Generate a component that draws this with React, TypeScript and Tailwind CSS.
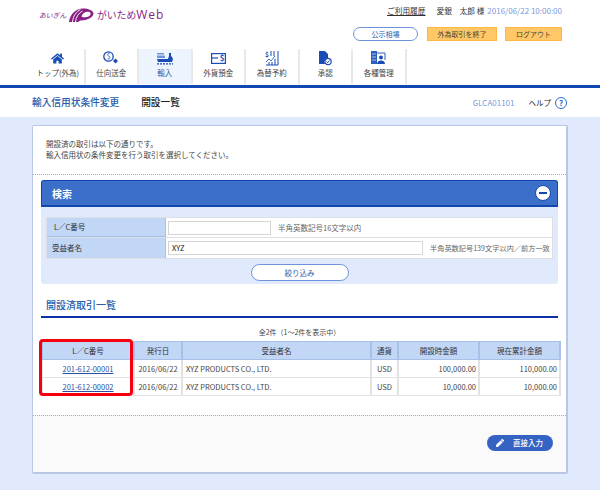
import React from 'react';
import { FaHome, FaPen } from 'react-icons/fa';

const font = { fontFamily: '"Noto Sans CJK JP", "Open Sans", sans-serif' };

const SendIcon = () => (
    <svg width="16" height="14" viewBox="0 0 16 14" fill="none">
        <circle cx="5.500" cy="5.500" r="4.700" stroke="#1a4db5" strokeWidth="1.300" />
        <text x="5.500" y="8.200" fontSize="7.500" textAnchor="middle" fill="#1a4db5">$</text>
        <path d="M12.500 7.500l2.500 2.500-2.500 2.500-2.500-2.500z" fill="#1a4db5" />
    </svg>
);

const ShipIcon = () => (
    <svg width="16" height="13" viewBox="0 0 16 13" fill="none">
        <path d="M0 1h7v1.500H0zM0 3.500h8V6H0z" fill="#6f94d6" />
        <path d="M0 7h11l1-3V1h2v3l1 1 1 2-1 3H1z" fill="#1a4db5" />
        <path d="M0 11.800h16" stroke="#1a4db5" strokeWidth="1.200" strokeDasharray="2 1" />
    </svg>
);

const DepositIcon = () => (
    <svg width="15" height="11" viewBox="0 0 15 11" fill="none">
        <rect x="0.600" y="0.600" width="13.800" height="9.800" stroke="#1a4db5" strokeWidth="1.200" />
        <path d="M1 5h6" stroke="#1a4db5" strokeWidth="1.200" />
        <text x="11" y="8.200" fontSize="8" textAnchor="middle" fontWeight="700" fill="#1a4db5">$</text>
    </svg>
);

const ForwardIcon = () => (
    <svg width="15" height="16" viewBox="0 0 15 16" fill="none">
        <text x="3" y="6.500" fontSize="6.500" textAnchor="middle" fontWeight="700" fill="#1a4db5">$</text>
        <path d="M7 1v5M10 1v5" stroke="#1a4db5" />
        <path d="M14 1v14H2" stroke="#1a4db5" />
        <path d="M2 12l3-3 2 2 4-5" stroke="#3f6cc4" />
        <path d="M5 15v-3M8 15v-3M11 15V9" stroke="#1a4db5" />
    </svg>
);

const ApproveIcon = () => (
    <svg width="13" height="15" viewBox="0 0 13 15" fill="none">
        <path d="M0 0h6l3 3v4a4 4 0 0 0-3 6H0z" fill="#1a4db5" />
        <circle cx="9" cy="10.500" r="3.200" stroke="#1a4db5" strokeWidth="1.200" fill="#fff" />
        <path d="M7.500 10.500l1.200 1.200 1.800-2.200" stroke="#1a4db5" />
    </svg>
);

const ManageIcon = () => (
    <svg width="15" height="14" viewBox="0 0 15 14" fill="none">
        <path d="M0 0h6v13H0z" fill="#2f5fbd" />
        <path d="M1 3h4M1 6h4M1 9h4" stroke="#a9c2ec" />
        <path d="M6 2h8v7" stroke="#2f5fbd" />
        <circle cx="10" cy="6.500" r="2" fill="#1a4db5" />
        <path d="M6 13c0-2.500 2-3.500 4-3.500s4 1 4 3.500z" fill="#1a4db5" />
    </svg>
);

const navItems = [
    { label: 'トップ(外為)', icon: <FaHome size={13} color="#1a4db5" /> },
    { label: '仕向送金', icon: <SendIcon /> },
    { label: '輸入', icon: <ShipIcon />, active: true },
    { label: '外貨預金', icon: <DepositIcon /> },
    { label: '為替予約', icon: <ForwardIcon /> },
    { label: '承認', icon: <ApproveIcon /> },
    { label: '各種管理', icon: <ManageIcon /> },
];

const rows = [
    { no: '201-612-00001', open: '100,000.00', total: '110,000.00' },
    { no: '201-612-00002', open: '10,000.00', total: '10,000.00' },
];

const Th = ({ className, children }: any) => (
    <th className={`h-[18px] border-x-2 border-y border-[#a8c0e8] bg-[#c2d6f6] text-[7.500px] font-normal text-[#333] ${className}`}>
        {children}
    </th>
);

const Td = ({ className, children }: any) => (
    <td className={`h-[18px] border-x-2 border-y border-[#e2e2e2] text-[7.500px] text-[#444] ${className}`}>
        {children}
    </td>
);

const App = () => {
    return (
        <div className="flex h-[490px] w-[600px] flex-col overflow-hidden bg-[#e0eafc]" style={font}>
            {/* Header */}
            <div className="bg-white">
                <div className="flex h-[48px] justify-between pl-[39px] pr-[38px] pt-[4px]">
                    <div className="flex h-[22px] items-center text-[#8a1f85]">
                        <span className="w-[28px] whitespace-nowrap text-[6.800px] italic">あいぎん</span>
                        <svg className="ml-[2px]" width="25" height="14" viewBox="0 0 25 14" fill="none">
                            <path d="M0 14C1 6 7 0.500 14 0.500c5 0 10.500 2 10.500 5 0 4-7 7-12 7-1 0-1.500 0-2 .5L9 14z" fill="#8a1f85" />
                            <path d="M3.500 14C4 8 7.500 3.500 11.500 1.500M6.500 14C7 9 9.500 5 13.500 3" stroke="#fff" strokeWidth="0.900" />
                            <path d="M12.500 8.500C13.500 5 16.500 3.800 19 3.800c2 0 3 1 2.500 2.700C21 8.500 16 10.500 12.500 8.500z" fill="#fff" />
                        </svg>
                        <span className="ml-[3px] whitespace-nowrap text-[9.800px]">がいため</span>
                        <span className="text-[12px] tracking-[1px]" style={{ fontFamily: '"Open Sans", sans-serif' }}>Web</span>
                    </div>
                    <div className="flex flex-col items-end">
                        <div className="flex h-[13px] items-center whitespace-nowrap text-[7.700px] text-[#333]">
                            <span className="underline">ご利用履歴</span>
                            <span className="ml-[11px]">愛銀　太郎 様</span>
                            <span className="ml-[3px] text-[8px] text-[#7a9ade]">2016/06/22 10:00:00</span>
                        </div>
                        <div className="mt-[10px] flex gap-[8px] text-[7px]">
                            <div className="mr-[1px] flex h-[14px] w-[65px] items-center justify-center rounded-full border border-[#6d93da] text-[#2a5caa]">公示相場</div>
                            <div className="flex h-[14px] w-[70px] items-center justify-center border border-[#fdb845] bg-[#ffc766] text-[#443]">外為取引を終了</div>
                            <div className="flex h-[14px] w-[57px] items-center justify-center border border-[#fdb845] bg-[#ffc766] text-[#443]">ログアウト</div>
                        </div>
                    </div>
                </div>
                {/* Nav */}
                <div className="flex h-[37px] py-[1px] pl-[32px]">
                    {navItems.map((item, index) => (
                        <div
                            key={index}
                            className={`flex w-[53.500px] flex-col items-center justify-between border-r-2 border-[#e8e8e8] pb-[6px] ${item.active ? 'bg-[#eef4fd]' : ''} ${index === 6 ? 'border-r-0' : ''}`}
                        >
                            <div className="flex h-[18px] items-center justify-center">{item.icon}</div>
                            <span className={`whitespace-nowrap text-[7.500px] leading-[10px] ${item.active ? 'text-[#2a5caa]' : 'text-[#444]'}`}>{item.label}</span>
                        </div>
                    ))}
                </div>
                <div className="h-[3px] bg-[#0f47b4]" />
                {/* Breadcrumb */}
                <div className="flex h-[29px] items-center pl-[32px] pr-[33px]">
                    <span className="text-[9.700px] font-medium text-[#2a5caa]">輸入信用状条件変更</span>
                    <span className="ml-[22px] text-[9.700px] font-medium text-[#222]">開設一覧</span>
                    <span className="ml-auto text-[8px] text-[#7a9ade]">GLCA01101</span>
                    <span className="ml-[14px] text-[7.500px] text-[#222]">ヘルプ</span>
                    <span className="ml-[4px] flex h-[12px] w-[12px] items-center justify-center rounded-full border border-[#2a6bd0] text-[8px] font-bold text-[#2a6bd0]">?</span>
                </div>
            </div>

            {/* Card */}
            <div className="mx-[32px] mt-[8px] flex h-[349px] flex-col rounded-[2px] border border-[#b8c8e4] border-b-2 border-r-2 bg-white">
                <div className="h-[48px] pl-[13px] pt-[12px] text-[7.500px] leading-[11px] text-[#444]">
                    <p>開設済の取引は以下の通りです。</p>
                    <p>輸入信用状の条件変更を行う取引を選択してください。</p>
                </div>
                <div className="border-t border-dotted border-[#aaa]" />

                {/* Search panel */}
                <div className="mx-[8px] mt-[5px] h-[104px] rounded-[3px] bg-[#e0eafc]">
                    <div className="flex h-[27px] items-center justify-between rounded-t-[3px] border border-b-2 border-[#1248ae] bg-[#3b6fc9] pl-[10px] pr-[6px]">
                        <span className="text-[10px] font-bold text-white">検索</span>
                        <span className="flex h-[16px] w-[16px] items-center justify-center rounded-full border border-[#1248ae] bg-white">
                            <span className="h-[2px] w-[8px] bg-[#1248ae]" />
                        </span>
                    </div>
                    <div className="mx-[5px] mt-[10px] border border-[#dcdfe6] text-[7.500px]">
                        <div className="flex h-[20px] border-b border-[#dcdfe6] bg-white">
                            <div className="flex w-[119px] shrink-0 items-center border-b border-r border-[#a8c0e8] bg-[#c2d6f6] pl-[7px] text-[#333]">L／C番号</div>
                            <div className="ml-[2px] flex items-center whitespace-nowrap">
                                <div className="h-[14px] w-[103px] shrink-0 border border-[#d5d5d5]" />
                                <span className="ml-[7px] text-[#666]">半角英数記号16文字以内</span>
                            </div>
                        </div>
                        <div className="flex h-[20px] bg-white">
                            <div className="flex w-[119px] shrink-0 items-center border-r border-[#a8c0e8] bg-[#c2d6f6] pl-[5px] text-[#333]">受益者名</div>
                            <div className="ml-[2px] flex items-center whitespace-nowrap">
                                <div className="flex h-[14px] w-[255px] shrink-0 items-center border border-[#d5d5d5] pl-[3px] text-[#222]">XYZ</div>
                                <span className="ml-[7px] text-[7.200px] text-[#666]">半角英数記号139文字以内／前方一致</span>
                            </div>
                        </div>
                    </div>
                    <div className="mt-[5px] flex justify-center">
                        <div className="flex h-[17px] w-[98px] items-center justify-center rounded-full border border-[#6d93da] bg-white text-[7.500px] text-[#2a5caa]">絞り込み</div>
                    </div>
                </div>

                {/* List */}
                <div className="mx-[8px] mt-[14px] border-b-2 border-[#0f2fa8] pb-[4px] pl-[5px] text-[10px] font-medium leading-[14px] text-[#2a5caa]">開設済取引一覧</div>
                <div className="mx-[8px] mt-[9px] text-center text-[7px] leading-[11px] text-[#444]">全2件（1～2件を表示中）</div>
                <div className="relative mx-[8px] mt-[3px]">
                    <table className="w-[518px] table-fixed border-collapse">
                        <colgroup>
                            <col className="w-[92px]" />
                            <col className="w-[48px]" />
                            <col className="w-[189px]" />
                            <col className="w-[27px]" />
                            <col className="w-[81px]" />
                            <col className="w-[81px]" />
                        </colgroup>
                        <thead>
                            <tr>
                                <Th>L／C番号</Th>
                                <Th>発行日</Th>
                                <Th>受益者名</Th>
                                <Th>通貨</Th>
                                <Th>開設時金額</Th>
                                <Th>現在累計金額</Th>
                            </tr>
                        </thead>
                        <tbody>
                            {rows.map((row) => (
                                <tr key={row.no}>
                                    <Td className="text-center"><span className="text-[#2a4f9e] underline">{row.no}</span></Td>
                                    <Td className="text-center">2016/06/22</Td>
                                    <Td className="pl-[3px]">XYZ PRODUCTS CO., LTD.</Td>
                                    <Td className="text-center">USD</Td>
                                    <Td className="pr-[2px] text-right">{row.open}</Td>
                                    <Td className="pr-[2px] text-right">{row.total}</Td>
                                </tr>
                            ))}
                        </tbody>
                    </table>
                    <div className="absolute left-[-2px] top-[-2px] h-[57px] w-[94px] rounded-[4px] border-[3px] border-[#f5000f]" />
                </div>

                {/* Footer */}
                <div className="mt-auto flex h-[57px] items-start justify-end border-t border-dotted border-[#aaa] bg-[#fafafa] pr-[13px] pt-[19px]">
                    <div className="flex h-[16px] w-[66px] items-center rounded-full bg-[#3563c4] pl-[9px] text-[7.500px] text-white">
                        <FaPen size={8} color="#fff" />
                        <span className="ml-[9px] font-medium">直接入力</span>
                    </div>
                </div>
            </div>
        </div>
    );
};

export default App;
